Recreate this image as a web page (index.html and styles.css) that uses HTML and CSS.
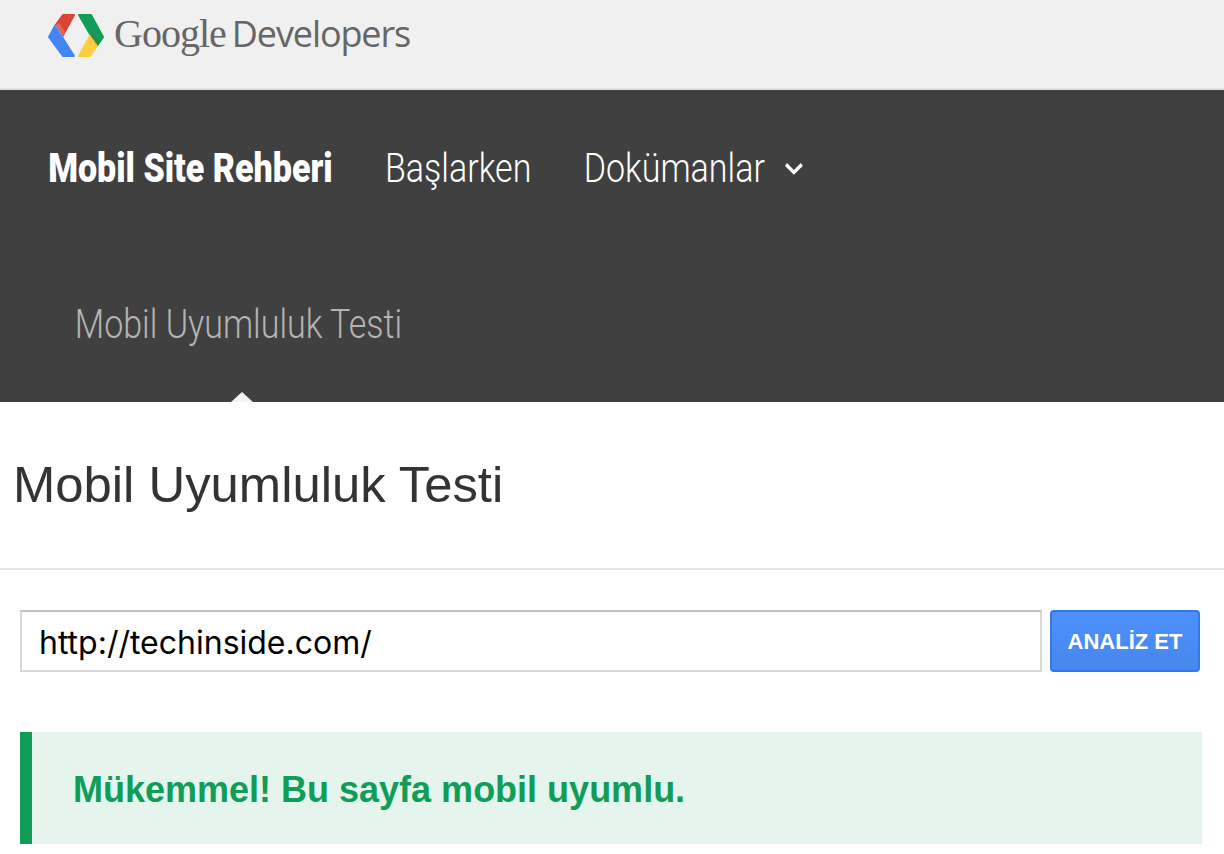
FILE: index.html
```html
<!DOCTYPE html>
<html lang="tr">
<head>
    <meta charset="UTF-8">
    <meta name="viewport" content="width=device-width, initial-scale=1.0">
    <title>Mobil Uyumluluk Testi</title>
    <link rel="stylesheet" href="styles.css">
</head>
<body>
    <header class="top-bar">
        <a class="logo" href="#">
            <svg class="logo-mark" width="58" height="46" viewBox="48 13 58 46">
                <g stroke-width="2" stroke-linejoin="round">
                    <polygon points="74,15 63,15 55,26 62,37" fill="#db4437" stroke="#db4437"/>
                    <polygon points="49,37 55,26 74,56 63,56" fill="#4285f4" stroke="#4285f4"/>
                    <polygon points="79,15 91,15 103,37 97,46" fill="#0f9d58" stroke="#0f9d58"/>
                    <polygon points="90,36 97,46 90,56 79,56" fill="#ffcd40" stroke="#ffcd40"/>
                    <polygon points="55,26 59,23 65,32 62,37" fill="#fff" opacity="0.2"/>
                    <polygon points="90,36 93,33 99,42 97,46" fill="#6b5a2a" opacity="0.3"/>
                </g>
            </svg>
            <span class="logo-google">Google</span>
            <span class="logo-dev">Developers</span>
        </a>
    </header>

    <nav class="main-nav">
        <div class="nav-row">
            <a class="nav-brand" href="#">Mobil Site Rehberi</a>
            <a class="nav-link" href="#">Başlarken</a>
            <a class="nav-link" href="#">Dokümanlar
                <svg class="chevron" width="23" height="13" viewBox="0 0 23 13"><path d="M2 2.5 L11.5 10.5 L21 2.5" fill="none" stroke="#fff" stroke-width="3.6"/></svg>
            </a>
        </div>
        <div class="nav-row sub-row">
            <a class="sub-link" href="#">Mobil Uyumluluk Testi</a>
        </div>
    </nav>

    <main>
        <h1 class="page-title">Mobil Uyumluluk Testi</h1>
        <form class="url-form" onsubmit="event.preventDefault();">
            <input class="url-input" type="text" value="http://techinside.com/">
            <button class="analyze-btn" type="submit">ANALİZ ET</button>
        </form>
        <div class="result">Mükemmel! Bu sayfa mobil uyumlu.</div>
    </main>
</body>
</html>
```

FILE: styles.css
```css
body {
    font-family: "Liberation Sans", Arial, sans-serif;
    margin: 0;
    padding: 0;
    background-color: #fff;
    overflow: hidden;
}

a {
    color: inherit;
    text-decoration: none;
}

.top-bar {
    height: 88px;
    background-color: #f0f0f0;
    border-bottom: 2px solid #e0e0e0;
    padding-left: 48px;
}

.logo {
    display: flex;
    align-items: baseline;
    color: #666;
    height: 70px;
    padding-top: 9px;
    box-sizing: border-box;
}

.logo-mark {
    align-self: flex-start;
    margin-top: 4px;
    margin-right: 8px;
    flex: none;
}

.logo-google {
    font-family: "Liberation Serif", serif;
    font-size: 40px;
    letter-spacing: -1px;
    margin-right: 6px;
}

.logo-dev {
    font-family: "Open Sans", sans-serif;
    font-size: 36px;
    font-weight: 500;
    letter-spacing: -1.1px;
}

.main-nav {
    position: relative;
    background-color: #404040;
    color: #fff;
    font-family: Roboto, sans-serif;
    font-size: 41px;
    overflow: hidden;
}

.main-nav::after {
    content: "";
    position: absolute;
    left: 231px;
    bottom: 0;
    border-left: 11px solid transparent;
    border-right: 11px solid transparent;
    border-bottom: 10px solid #f4f4f4;
}

/* no condensed Roboto installed, so squeeze the whole row */
.nav-row {
    display: flex;
    align-items: center;
    height: 156px;
    padding-left: 58px;
    transform: scaleX(0.83);
    transform-origin: left;
}

.nav-brand {
    font-weight: 900;
    margin-right: 63px;
}

.nav-link {
    display: inline-flex;
    align-items: center;
    gap: 23px;
    font-weight: 300;
    margin-right: 63px;
}

.sub-row {
    padding-left: 90px;
}

.sub-link {
    color: #b4b4b4;
    font-weight: 300;
}

.page-title {
    margin: 0;
    height: 168px;
    box-sizing: border-box;
    padding: 53px 0 0 13px;
    font-size: 50.8px;
    line-height: 60px;
    font-weight: 400;
    color: #333;
    border-bottom: 2px solid #e5e5e5;
}

.url-form {
    display: flex;
    gap: 8px;
    margin: 40px 24px 0 20px;
}

.url-input {
    flex: 1;
    box-sizing: border-box;
    height: 62px;
    padding: 2px 17px 0;
    border: 2px solid #d9d9d9;
    border-top-color: #c0c0c0;
    font-family: Inter, sans-serif;
    font-size: 32px;
    color: #000;
    outline: none;
}

.analyze-btn {
    width: 150px;
    height: 62px;
    background: linear-gradient(#4d90fe, #4787ed);
    border: 2px solid #3079ed;
    border-radius: 4px;
    color: #fff;
    font-family: "Liberation Sans", Arial, sans-serif;
    font-size: 22px;
    font-weight: 700;
    cursor: pointer;
    padding: 2px 0 0;
}

.result {
    box-sizing: border-box;
    height: 112px;
    margin: 60px 22px 0 20px;
    padding: 37px 0 0 41px;
    background-color: #e5f4ed;
    border-left: 12px solid #0f9d58;
    color: #0f9d58;
    font-size: 36px;
    line-height: 42px;
    font-weight: 700;
}
```
